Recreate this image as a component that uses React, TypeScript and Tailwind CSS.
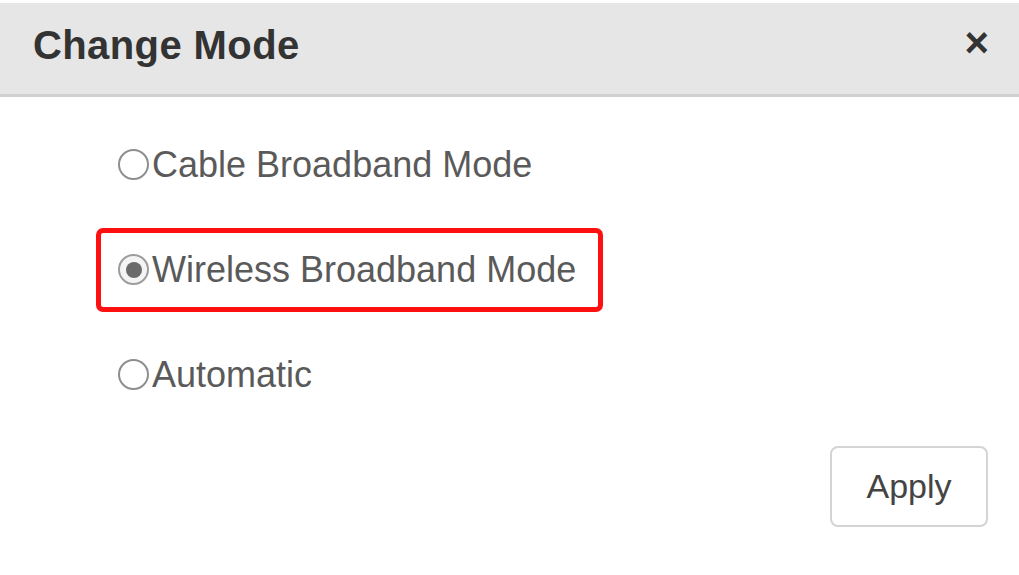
import { useState } from 'react';

type Mode = 'cable' | 'wireless' | 'auto';

const MODES: { id: Mode; label: string }[] = [
  { id: 'cable', label: 'Cable Broadband Mode' },
  { id: 'wireless', label: 'Wireless Broadband Mode' },
  { id: 'auto', label: 'Automatic' },
];

const Radio = ({ checked }: { checked: boolean }) => (
  <span
    className={`flex h-[31px] w-[31px] shrink-0 items-center justify-center rounded-full border-2 ${
      checked ? 'border-[#9c9c9c] bg-[#f4f4f4]' : 'border-[#8e8e8e] bg-white'
    }`}
  >
    {checked && <span className="h-[16px] w-[16px] rounded-full bg-[#6a6a6a]" />}
  </span>
);

const App = () => {
  const [mode, setMode] = useState<Mode>('wireless');

  return (
    <div className="h-[575px] w-[1019px] overflow-hidden bg-white font-['Liberation_Sans',Arial,sans-serif]">
      <header className="mt-[3px] flex h-[94px] items-center justify-between border-b-[3px] border-[#d0d0d0] bg-[#e6e6e6] pl-[33px] pr-[30px]">
        <h1 className="mb-[8px] text-[40px] font-bold tracking-[0.4px] text-[#333]">Change Mode</h1>
        <button className="mb-[12px] text-[42px] leading-none font-bold text-[#333]">×</button>
      </header>

      <div className="pl-[96px] pt-[15px]">
        {MODES.map((m) => {
          const boxed = m.id === 'wireless';
          return (
            <div key={m.id} className="flex h-[105px] items-center">
              <label
                onClick={() => setMode(m.id)}
                className={`flex h-[84px] cursor-pointer items-center rounded-[7px] border-[5px] pl-[17px] pr-[22px] ${
                  boxed ? 'border-[#ff1010]' : 'border-transparent'
                }`}
              >
                <Radio checked={mode === m.id} />
                <span className="ml-[3px] text-[36px] text-[#5a5a5a]">{m.label}</span>
              </label>
            </div>
          );
        })}
      </div>

      <div className="mt-[19px] flex justify-end pr-[31px]">
        <button className="flex h-[81px] w-[158px] items-center justify-center rounded-[8px] border-2 border-[#d4d4d4] bg-white text-[34px] text-[#444]">
          Apply
        </button>
      </div>
    </div>
  );
};

export default App;
